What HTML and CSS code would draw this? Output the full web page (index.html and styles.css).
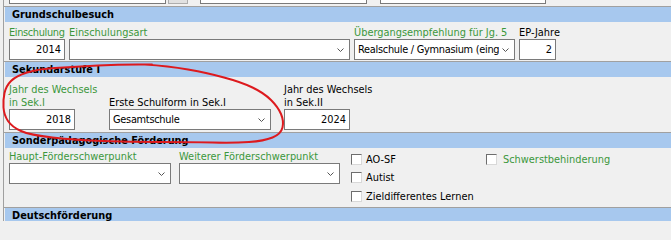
FILE: index.html
```html
<!DOCTYPE html>
<html lang="de">
<head>
<meta charset="utf-8">
<title>Schullaufbahn</title>
<link rel="stylesheet" href="styles.css">
</head>
<body>
<div class="form">
  <div class="panel top-strip">
    <span class="box w157"></span>
    <span class="btn"></span>
    <span class="box w167 ml12"></span>
    <span class="box w166 ml13"></span>
  </div>

  <section class="panel">
    <h2 class="sec-head">Grundschulbesuch</h2>
    <div class="sec-body s1">
      <div class="field w56">
        <label class="lbl green tight">Einschulung</label>
        <div class="ctl num">2014</div>
      </div>
      <div class="field w281 ml4">
        <label class="lbl green">Einschulungsart</label>
        <div class="ctl select"><span class="val"></span><svg class="chev" viewBox="0 0 7 4"><polyline points="0.5,0.5 3.5,3.5 6.5,0.5"/></svg></div>
      </div>
      <div class="field w161 ml4">
        <label class="lbl green">Übergangsempfehlung für Jg. 5</label>
        <div class="ctl select"><span class="val">Realschule / Gymnasium (eing</span><svg class="chev" viewBox="0 0 7 4"><polyline points="0.5,0.5 3.5,3.5 6.5,0.5"/></svg></div>
      </div>
      <div class="field w37 ml4">
        <label class="lbl">EP-Jahre</label>
        <div class="ctl num">2</div>
      </div>
    </div>
  </section>

  <section class="panel">
    <h2 class="sec-head">Sekundarstufe I</h2>
    <div class="sec-body s2">
      <div class="field w66">
        <label class="lbl green">Jahr des Wechsels<br>in Sek.I</label>
        <div class="ctl num">2018</div>
      </div>
      <div class="field w162 ml34">
        <label class="lbl">Erste Schulform in Sek.I</label>
        <div class="ctl select"><span class="val">Gesamtschule</span><svg class="chev" viewBox="0 0 7 4"><polyline points="0.5,0.5 3.5,3.5 6.5,0.5"/></svg></div>
      </div>
      <div class="field w66 ml13">
        <label class="lbl">Jahr des Wechsels<br>in Sek.II</label>
        <div class="ctl num">2024</div>
      </div>
    </div>
  </section>

  <section class="panel">
    <h2 class="sec-head">Sonderpädagogische Förderung</h2>
    <div class="sec-body s3">
      <div class="field w162">
        <label class="lbl green">Haupt-Förderschwerpunkt</label>
        <div class="ctl select"><span class="val"></span><svg class="chev" viewBox="0 0 7 4"><polyline points="0.5,0.5 3.5,3.5 6.5,0.5"/></svg></div>
      </div>
      <div class="field w161 ml8">
        <label class="lbl green">Weiterer Förderschwerpunkt</label>
        <div class="ctl select"><span class="val"></span><svg class="chev" viewBox="0 0 7 4"><polyline points="0.5,0.5 3.5,3.5 6.5,0.5"/></svg></div>
      </div>
      <div class="checks w135 ml11">
        <label class="check"><span class="cb"></span>AO-SF</label>
        <label class="check"><span class="cb"></span>Autist</label>
        <label class="check"><span class="cb"></span>Zieldifferentes Lernen</label>
      </div>
      <div class="checks">
        <label class="check green"><span class="cb"></span>Schwerstbehinderung</label>
      </div>
    </div>
  </section>

  <section class="panel">
    <h2 class="sec-head">Deutschförderung</h2>
  </section>
</div>

<svg class="annot" width="671" height="221" viewBox="0 0 671 221">
  <path d="M145,64.5 Q168,66 188,69.5 Q208,73 224,77.5 Q241,82 252.5,87.5 Q264,93 271,100 Q278,107 281,114 Q284,121 282.5,127.5 Q281,134 272.5,137.5 Q264,141 249,142 Q234,143 212.5,142.5 Q190,142 160,142 Q130,142 102.5,141 Q75,140 52.5,137.5 Q30,135 21,131 Q12,127 8,121 Q4,115 3.5,107.5 Q3,100 4.5,93 Q6,86 11,81 Q16,76 27,72.5 Q38,69 55,68 Q72,67 98,65.5 Q124,64 152,64.5"/>
</svg>
</body>
</html>
```

FILE: styles.css
```css
* { box-sizing: border-box; }
html { margin: 0; padding: 0; background: #f0f0f0; }
body {
  margin: 0;
  padding: 0;
  background: #f0f0f0;
  font-family: "DejaVu Sans", "Liberation Sans", sans-serif;
  font-size: 9.8px;
  color: #000;
  width: 671px;
  height: 221px;
  overflow: hidden;
  position: relative;
}
.form { margin-left: 3px; }
.panel {
  border-left: 1px solid #a0a0a0;
  border-bottom: 1px solid #a0a0a0;
}
.top-strip {
  height: 7px;
  padding: 0 0 2px 5px;
  display: flex;
  align-items: flex-end;
  overflow: hidden;
}
.box {
  flex: none;
  height: 20px;
  background: #fff;
  border: 1px solid #7a7a7a;
}
.btn {
  flex: none;
  width: 20px;
  height: 20px;
  margin-left: 2px;
  background: #e1e1e1;
  border: 1px solid #adadad;
}
.sec-head {
  margin: 0 0 0 1px;
  height: 15px;
  line-height: 16px;
  padding-left: 7px;
  background: #a7c8ee;
  font-size: 9.8px;
  font-weight: bold;
  white-space: nowrap;
  overflow: hidden;
}
.sec-body {
  display: flex;
  align-items: flex-end;
  padding-left: 5px;
}
.s1 { padding-top: 4px; padding-bottom: 1px; }
.s2 { padding-top: 6px; padding-bottom: 2px; }
.s3 { height: 59px; padding-top: 2px; align-items: flex-start; }

.field { display: flex; flex-direction: column; flex: none; }
.lbl { line-height: 13px; white-space: nowrap; }
.tight { letter-spacing: -0.35px; }
.green { color: #3b973b; }
.ctl {
  height: 21px;
  background: #fff;
  border: 1px solid #7a7a7a;
  display: flex;
  align-items: center;
  white-space: nowrap;
}
.num { justify-content: flex-end; padding-right: 3px; }
.select { padding-left: 3px; padding-right: 5px; }
.select .val { flex: 1; min-width: 0; overflow: hidden; letter-spacing: -0.28px; }
.chev { flex: none; width: 7px; height: 4px; margin-left: 3px; overflow: visible; }
.chev polyline { fill: none; stroke: #555; stroke-width: 1; }

.checks { display: flex; flex-direction: column; flex: none; }
.check {
  height: 18.5px;
  display: flex;
  align-items: center;
  white-space: nowrap;
}
.cb {
  flex: none;
  width: 11px;
  height: 11px;
  margin-right: 4px;
  background: #fff;
  border: 1px solid;
  border-color: #6d6d6d #d8d8d8 #d8d8d8 #6d6d6d;
}
.check.green .cb { margin-right: 6px; }

.w37 { width: 37px; }
.w56 { width: 56px; }
.w66 { width: 66px; }
.w135 { width: 135px; }
.w157 { width: 157px; }
.w161 { width: 161px; }
.w162 { width: 162px; }
.w166 { width: 166px; }
.w167 { width: 167px; }
.w281 { width: 281px; }
.ml4 { margin-left: 4px; }
.ml8 { margin-left: 8px; }
.ml11 { margin-left: 11px; }
.ml12 { margin-left: 12px; }
.ml13 { margin-left: 13px; }
.ml34 { margin-left: 34px; }

.annot {
  position: absolute;
  left: 0;
  top: 0;
  pointer-events: none;
}
.annot path {
  fill: none;
  stroke: #dd1a1e;
  stroke-width: 2;
  stroke-linecap: round;
  stroke-linejoin: round;
}
```
